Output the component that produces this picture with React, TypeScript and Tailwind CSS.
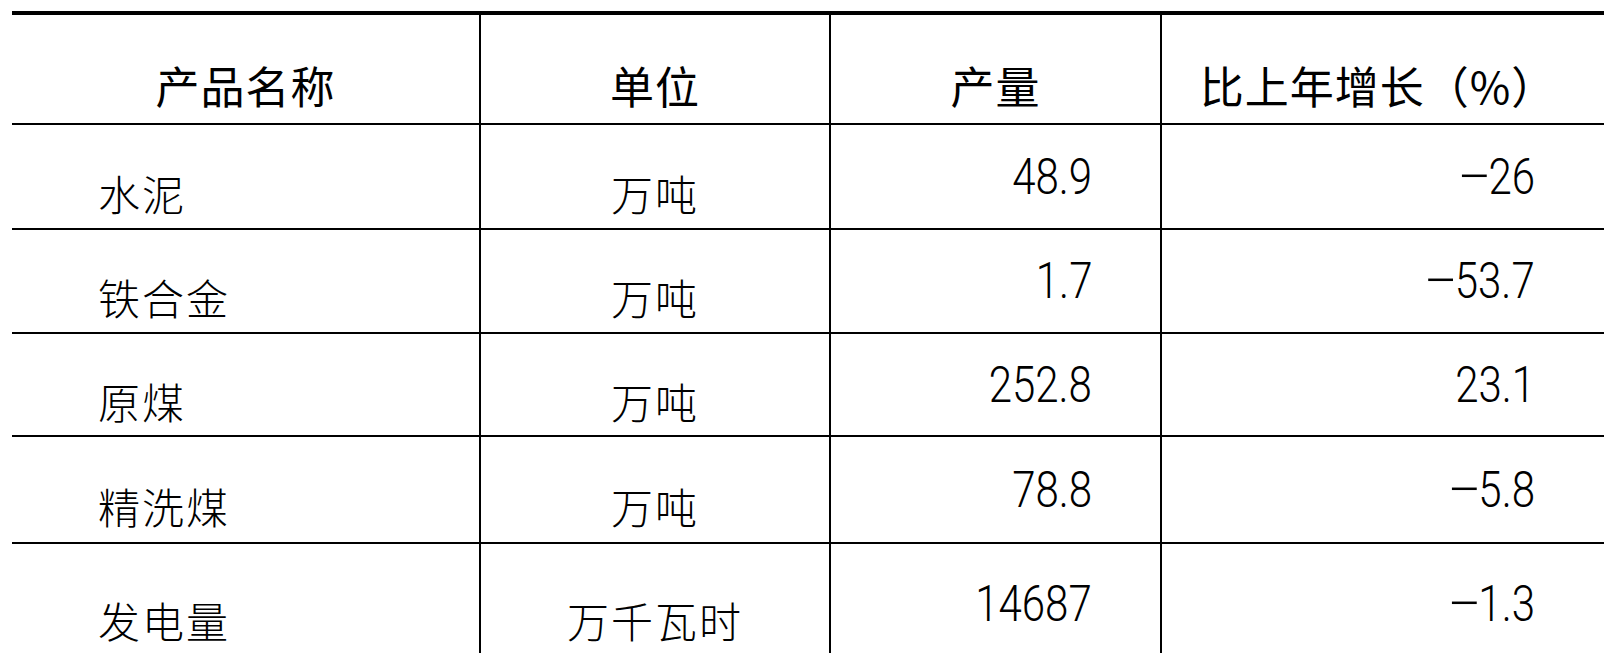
import React from "react";

const cjk = "font-['Noto_Sans_CJK_SC','Noto_Sans_CJK_JP',sans-serif]";
const num = "font-['Roboto','Liberation_Sans',sans-serif]";

const rows: { name: string; unit: string; qty: string; growth: string; h: string }[] = [
  { name: "水泥", unit: "万吨", qty: "48.9", growth: "−26", h: "h-[105px]" },
  { name: "铁合金", unit: "万吨", qty: "1.7", growth: "−53.7", h: "h-[104px]" },
  { name: "原煤", unit: "万吨", qty: "252.8", growth: "23.1", h: "h-[103px]" },
  { name: "精洗煤", unit: "万吨", qty: "78.8", growth: "−5.8", h: "h-[107px]" },
  { name: "发电量", unit: "万千瓦时", qty: "14687", growth: "−1.3", h: "h-[120px]" },
];

function Num({ v }: { v: string }) {
  const neg = v.startsWith("−");
  const body = neg ? v.slice(1) : v;
  return (
    <span className={`${num} inline-flex items-center origin-right scale-x-[0.84] text-[50px] font-light leading-none text-black`}>
      {neg && <span className="mr-[-4px] inline-block origin-right scale-x-[1.45]">−</span>}
      {body}
    </span>
  );
}

export default function App() {
  return (
    <div className="h-[653px] w-[1604px] overflow-hidden bg-white">
      <div className="ml-[12px] mt-[11px] w-[1592px] border-t-4 border-black">
        <div className="grid h-[110px] grid-cols-[467px_350px_331px_1fr] border-b-2 border-black">
          <div className={`${cjk} flex items-center justify-center pt-[32px] text-[44px] font-normal leading-none tracking-[1px] text-black`}>
            产品名称
          </div>
          <div className={`${cjk} flex items-center justify-center border-l-2 border-black pt-[32px] text-[44px] font-normal leading-none tracking-[1px] text-black`}>
            单位
          </div>
          <div className={`${cjk} flex items-center justify-center border-l-2 border-black pt-[32px] text-[44px] font-normal leading-none tracking-[1px] text-black`}>
            产量
          </div>
          <div className={`${cjk} flex items-center justify-center border-l-2 border-black pr-[10px] pt-[32px] text-[44px] font-normal leading-none tracking-[1px] text-black`}>
            比上年增长（%）
          </div>
        </div>
        {rows.map((r, i) => (
          <div
            key={r.name}
            className={`grid ${r.h} grid-cols-[467px_350px_331px_1fr] ${i < rows.length - 1 ? "border-b-2 border-black" : ""}`}
          >
            <div className={`${cjk} flex items-center pl-[86px] pt-[32px] text-[42px] font-light leading-none tracking-[2px] text-black`}>
              {r.name}
            </div>
            <div className={`${cjk} flex items-center justify-center border-l-2 border-black pt-[32px] text-[42px] font-light leading-none tracking-[2px] text-black`}>
              {r.unit}
            </div>
            <div className="flex items-center justify-end border-l-2 border-black pr-[68px]">
              <Num v={r.qty} />
            </div>
            <div className="flex items-center justify-end border-l-2 border-black pr-[69px]">
              <Num v={r.growth} />
            </div>
          </div>
        ))}
      </div>
    </div>
  );
}
